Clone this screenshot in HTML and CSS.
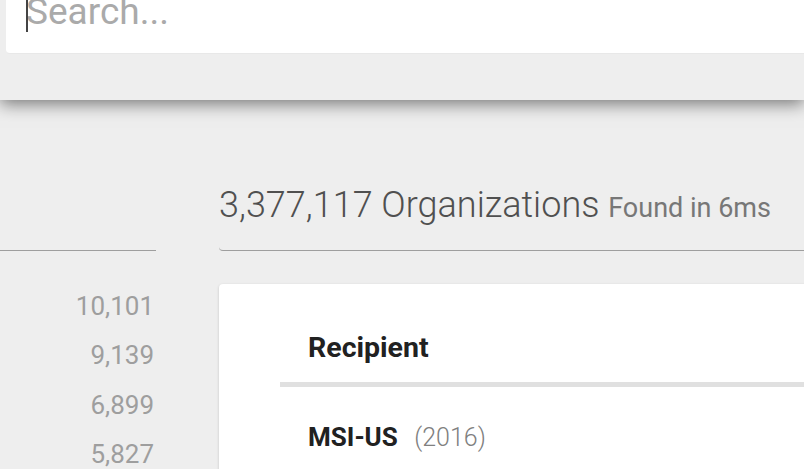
FILE: index.html
```html
<!DOCTYPE html>
<html lang="en">
<head>
<meta charset="utf-8">
<title>Organizations</title>
<link rel="stylesheet" href="styles.css">
</head>
<body>
<header class="topbar">
  <div class="search-box">
    <span class="caret"></span>
    <div class="search-text">Search...</div>
  </div>
</header>
<div class="content">
  <aside class="facet">
    <div class="facet-head"></div>
    <ul class="facet-list">
      <li>10,101</li>
      <li>9,139</li>
      <li>6,899</li>
      <li>5,827</li>
    </ul>
  </aside>
  <main class="results">
    <div class="results-head">
      <h1 class="title">3,377,117 Organizations <span class="found">Found in 6ms</span></h1>
    </div>
    <div class="card">
      <table class="table">
        <thead>
          <tr><th>Recipient</th></tr>
        </thead>
        <tbody>
          <tr><td><span class="name">MSI-US</span> <span class="year">(2016)</span></td></tr>
        </tbody>
      </table>
    </div>
  </main>
</div>
</body>
</html>
```
FILE: styles.css
```css
html, body {
  margin: 0;
  padding: 0;
  background: #eeeeee;
  font-family: Roboto, "Noto Sans", sans-serif;
  overflow: hidden;
  height: 469px;
}

.topbar {
  position: relative;
  z-index: 2;
  height: 100px;
  background: #eeeeee;
  box-shadow: 0 4px 16px rgba(0, 0, 0, 0.5);
}

.search-box {
  position: relative;
  margin-left: 6px;
  margin-right: -20px;
  height: 54px;
  background: #ffffff;
  border-radius: 0 0 0 4px;
  border-bottom: 1px solid #e8e8e8;
  box-sizing: border-box;
  overflow: hidden;
}

.caret {
  position: absolute;
  left: 20px;
  top: 0;
  width: 1.5px;
  height: 32px;
  background: #444;
}

.search-text {
  margin-top: -10px;
  padding-left: 20px;
  font-size: 37px;
  line-height: 43px;
  color: #aaaaaa;
}

.content {
  display: flex;
  align-items: flex-start;
  gap: 63px;
  padding-top: 84px;
}

.facet {
  width: 156px;
  flex: none;
}

.facet-head {
  height: 66px;
  border-bottom: 1px solid #9e9e9e;
}

.facet-list {
  list-style: none;
  margin: 31px 0 0;
  padding: 0 2px 0 0;
  text-align: right;
  font-size: 26px;
  line-height: 49.3px;
  color: #9e9e9e;
}

.results {
  flex: 1;
  margin-right: -20px;
}

.results-head {
  height: 66px;
  border-bottom: 1px solid #9e9e9e;
  border-radius: 0 0 0 4px;
}

.title {
  margin: 0;
  font-size: 36px;
  line-height: 42px;
  font-weight: 300;
  color: #505050;
}

.found {
  font-size: 27px;
  line-height: 1;
  font-weight: 400;
  color: #777777;
}

.card {
  margin-top: 33px;
  background: #ffffff;
  border-radius: 4px 0 0 0;
  box-shadow: 0 1px 3px rgba(0, 0, 0, 0.18);
  padding: 47px 0 0 61px;
  height: 300px;
}

.table {
  width: 100%;
  border-collapse: collapse;
  text-align: left;
}

.table th {
  padding: 0 28px 17px;
  font-size: 28.5px;
  line-height: 34px;
  font-weight: 700;
  color: #212121;
  border-bottom: 5px solid #e0e0e0;
}

.table td {
  padding: 33px 28px 0;
  font-size: 26px;
  line-height: 34px;
  color: #212121;
}

.name {
  font-weight: 700;
}

.year {
  margin-left: 10px;
  font-size: 25px;
  font-weight: 300;
  color: #808080;
}
```
